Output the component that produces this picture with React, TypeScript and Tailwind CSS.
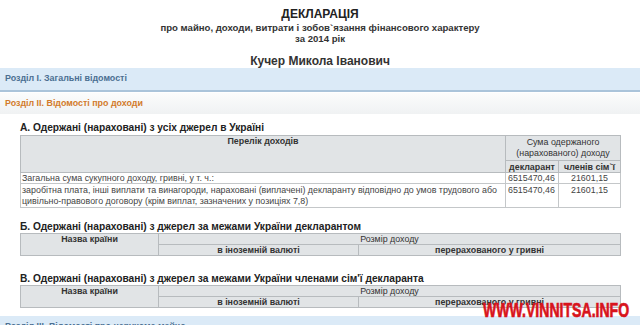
import React from "react";

const font = { fontFamily: '"Liberation Sans", Arial, sans-serif' };

const SectionBar = ({ title, tone }: { title: string; tone: "blue" | "plain" }) => (
  <div
    className={`flex items-center px-[5px] text-[8.9px] font-bold ${
      tone === "blue"
        ? "h-[24px] bg-[#dbeaf7] text-[#4b6f92] border-b-2 border-[#aac4da]"
        : "h-[21px] bg-gradient-to-b from-[#fbfcfc] to-[#f0f2f3] text-[#d27b2c]"
    }`}
  >
    {title}
  </div>
);

const th = "bg-[#e1e4e6] border border-[#b7bbbe] p-0";

// Таблиця для Б і В — однакова структура
const AbroadTable = () => (
  <table className="w-[601px] border-collapse text-[8.9px] text-[#333] leading-[10px]">
    <tbody>
      <tr className="h-[11px]">
        <td rowSpan={2} className={`${th} w-[138px] font-bold text-center align-top`}>
          Назва країни
        </td>
        <td colSpan={2} className={`${th} text-center`}>
          Розмір доходу
        </td>
      </tr>
      <tr className="h-[11px]">
        <td className={`${th} w-[200px] font-bold text-center`}>в іноземній валюті</td>
        <td className={`${th} font-bold text-center`}>перерахованого у гривні</td>
      </tr>
    </tbody>
  </table>
);

const td = "border border-[#c4c7c9] p-0";

export default function App() {
  return (
    <div className="relative w-[640px] h-[325px] overflow-hidden bg-white text-[#222]" style={font}>
      {/* Шапка декларації */}
      <div className="flex flex-col items-center pt-[6px]">
        <div className="text-[12px] font-bold leading-[16px] text-[#222]">ДЕКЛАРАЦІЯ</div>
        <div className="text-[9.6px] font-bold leading-[11px] text-[#333]">
          про майно, доходи, витрати і зобов`язання фінансового характеру
        </div>
        <div className="text-[9.6px] font-bold leading-[11px] text-[#333]">за 2014 рік</div>
        <div className="mt-[10px] text-[12px] font-bold leading-[14px] text-[#333]">Кучер Микола Іванович</div>
      </div>

      <SectionBar title="Розділ I. Загальні відомості" tone="blue" />
      <div className="h-[1px]" />
      <SectionBar title="Розділ II. Відомості про доходи" tone="plain" />

      <div className="pl-[20px] pt-[7px]">
        <div className="text-[10.2px] font-bold leading-[13px] mb-[1px] text-[#222]">
          А. Одержані (нараховані) з усіх джерел в Україні
        </div>
        <table className="w-[601px] border-collapse text-[8.9px] text-[#444] leading-[10px]">
          <tbody>
            <tr className="h-[25px]">
              <td rowSpan={2} className={`${th} font-bold text-center align-top text-[#333]`}>
                Перелік доходів
              </td>
              <td colSpan={2} className={`${th} w-[115px] text-center text-[#333] leading-[11px]`}>
                Сума одержаного (нарахованого) доходу
              </td>
            </tr>
            <tr className="h-[12px]">
              <td className={`${th} w-[53px] font-bold text-center text-[#333]`}>декларант</td>
              <td className={`${th} w-[62px] font-bold text-center text-[#333]`}>членів сім`ї</td>
            </tr>
            <tr className="h-[11px]">
              <td className={`${td} pl-[1px]`}>Загальна сума сукупного доходу, гривні, у т. ч.:</td>
              <td className={`${td} pl-[2px]`}>6515470,46</td>
              <td className={`${td} text-center`}>21601,15</td>
            </tr>
            <tr className="h-[24px]">
              <td className={`${td} pl-[1px] pt-[1px] align-top leading-[11px]`}>
                заробітна плата, інші виплати та винагороди, нараховані (виплачені) декларанту відповідно до умов трудового або
                цивільно-правового договору (крім виплат, зазначених у позиціях 7,8)
              </td>
              <td className={`${td} pl-[2px] pt-[1px] align-top`}>6515470,46</td>
              <td className={`${td} pt-[1px] text-center align-top`}>21601,15</td>
            </tr>
          </tbody>
        </table>

        <div className="mt-[12px] text-[10.2px] font-bold leading-[13px] text-[#222]">
          Б. Одержані (нараховані) з джерел за межами України декларантом
        </div>
        <AbroadTable />

        <div className="mt-[16px] text-[10.2px] font-bold leading-[13px] text-[#222]">
          В. Одержані (нараховані) з джерел за межами України членами сім'ї декларанта
        </div>
        <AbroadTable />
      </div>

      <div className="mt-[8px]">
        <SectionBar title="Розділ III. Відомості про нерухоме майно" tone="blue" />
      </div>

      {/* водяний знак */}
      <div className="absolute left-[483px] top-[299px] text-[21px] font-bold leading-[21px] text-[#d8141c] whitespace-nowrap origin-left scale-x-[0.67] [-webkit-text-stroke:0.7px_#d8141c]">
        WWW.VINNITSA.INFO
      </div>
    </div>
  );
}
